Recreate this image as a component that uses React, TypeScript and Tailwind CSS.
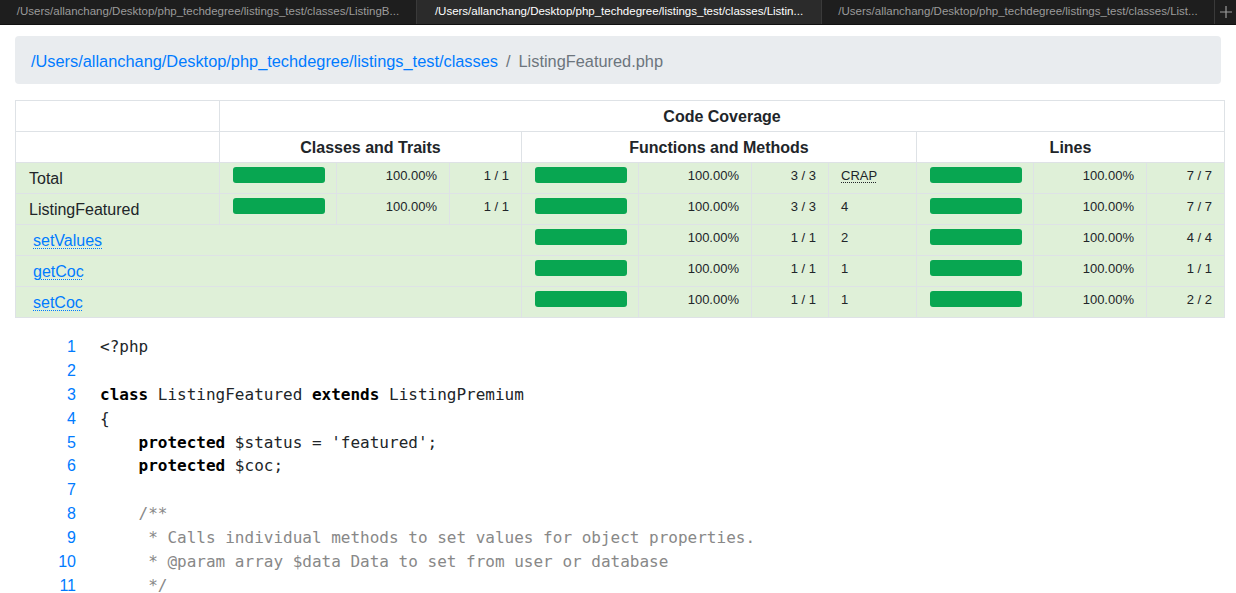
import React from 'react';

const SANS = "font-['Liberation_Sans',Arial,sans-serif]";
const MONO = "font-['DejaVu_Sans_Mono',monospace]";

type Row = {
  name: string;
  method?: boolean;
  classes?: { pct: string; count: string };
  fns: { pct: string; count: string };
  crap: string;
  lines: { pct: string; count: string };
};

const rows: Row[] = [
  { name: 'Total', classes: { pct: '100.00%', count: '1 / 1' }, fns: { pct: '100.00%', count: '3 / 3' }, crap: 'CRAP', lines: { pct: '100.00%', count: '7 / 7' } },
  { name: 'ListingFeatured', classes: { pct: '100.00%', count: '1 / 1' }, fns: { pct: '100.00%', count: '3 / 3' }, crap: '4', lines: { pct: '100.00%', count: '7 / 7' } },
  { name: 'setValues', method: true, fns: { pct: '100.00%', count: '1 / 1' }, crap: '2', lines: { pct: '100.00%', count: '4 / 4' } },
  { name: 'getCoc', method: true, fns: { pct: '100.00%', count: '1 / 1' }, crap: '1', lines: { pct: '100.00%', count: '1 / 1' } },
  { name: 'setCoc', method: true, fns: { pct: '100.00%', count: '1 / 1' }, crap: '1', lines: { pct: '100.00%', count: '2 / 2' } },
];

const tabs = [
  { label: '/Users/allanchang/Desktop/php_techdegree/listings_test/classes/ListingB...', w: 'w-[417px]', active: false },
  { label: '/Users/allanchang/Desktop/php_techdegree/listings_test/classes/Listin...', w: 'w-[405px]', active: true },
  { label: '/Users/allanchang/Desktop/php_techdegree/listings_test/classes/List...', w: 'w-[393px]', active: false },
];

// each code line is a list of [text, kind]
type Tok = [string, 'k' | 'c' | 't'];
const code: Tok[][] = [
  [['<?php', 't']],
  [],
  [['class', 'k'], [' ListingFeatured ', 't'], ['extends', 'k'], [' ListingPremium', 't']],
  [['{', 't']],
  [['    ', 't'], ['protected', 'k'], [" $status = 'featured';", 't']],
  [['    ', 't'], ['protected', 'k'], [' $coc;', 't']],
  [],
  [['    /**', 'c']],
  [['     * Calls individual methods to set values for object properties.', 'c']],
  [['     * @param array $data Data to set from user or database', 'c']],
  [['     */', 'c']],
];

function Bar() {
  return <div className="h-4 w-[92px] rounded-[3px] bg-[#08a651]" />;
}

const cell = 'border border-[#dee2e6] px-3 h-[31px] align-top pb-0';
const big = `${cell} pt-1 leading-6`;
const small = `${cell} pt-[3px] text-[13px] leading-5`;
const barCell = `${cell} pl-[13px] pt-[4px]`;

export default function App() {
  return (
    <div className={`min-h-screen bg-white ${SANS} text-[#212529]`}>
      {/* tab strip */}
      <div className="flex h-[25px] bg-[#1e1e1e] border-b border-[#111]">
        {tabs.map((t) => (
          <div
            key={t.label}
            className={`${t.w} shrink-0 flex items-center justify-center border-r border-[#3a3a3a] text-[11.5px] truncate ${
              t.active ? 'bg-[#2b2b2b] text-white' : 'text-[#9b9b9b]'
            }`}
          >
            {t.label}
          </div>
        ))}
        <div className="flex-1 flex items-center justify-center text-[#9b9b9b]">
          <svg width="12" height="12" viewBox="0 0 12 12" stroke="currentColor" strokeWidth="1.2">
            <path d="M6 0v12M0 6h12" />
          </svg>
        </div>
      </div>

      <div className="px-[15px]">
        {/* breadcrumb */}
        <div className="mt-[11px] h-12 flex items-center pt-[2px] px-4 rounded bg-[#e9ecef] text-[16.35px]">
          <span className="text-[#007bff]">/Users/allanchang/Desktop/php_techdegree/listings_test/classes</span>
          <span className="px-2 text-[#6c757d]">/</span>
          <span className="text-[#6c757d]">ListingFeatured.php</span>
        </div>

        {/* coverage table */}
        <table className="mt-4 w-[1209px] table-fixed border-collapse text-base">
          <colgroup>
            <col className="w-[204px]" />
            <col className="w-[117px]" />
            <col className="w-[113px]" />
            <col className="w-[72px]" />
            <col className="w-[117px]" />
            <col className="w-[113px]" />
            <col className="w-[77px]" />
            <col className="w-[88px]" />
            <col className="w-[117px]" />
            <col className="w-[113px]" />
            <col className="w-[78px]" />
          </colgroup>
          <thead>
            <tr>
              <td className={big} />
              <th colSpan={10} className={`${big} text-center font-bold`}>Code Coverage</th>
            </tr>
            <tr>
              <td className={big} />
              <th colSpan={3} className={`${big} text-center font-bold`}>Classes and Traits</th>
              <th colSpan={4} className={`${big} text-center font-bold`}>Functions and Methods</th>
              <th colSpan={3} className={`${big} text-center font-bold`}>Lines</th>
            </tr>
          </thead>
          <tbody>
            {rows.map((r) => (
              <tr key={r.name} className="bg-[#dff0d8]">
                {r.method ? (
                  <td colSpan={4} className={`${big} pl-[17px]`}>
                    <span className="text-[#007bff] underline decoration-dotted decoration-1 underline-offset-2">{r.name}</span>
                  </td>
                ) : (
                  <>
                    <td className={`${big} pl-[13px]`}>{r.name}</td>
                    <td className={barCell}><Bar /></td>
                    <td className={`${small} text-right`}>{r.classes?.pct}</td>
                    <td className={`${small} text-right`}>{r.classes?.count}</td>
                  </>
                )}
                <td className={barCell}><Bar /></td>
                <td className={`${small} text-right`}>{r.fns.pct}</td>
                <td className={`${small} text-right`}>{r.fns.count}</td>
                <td className={small}>
                  {r.crap === 'CRAP' ? (
                    <span className="underline decoration-dotted decoration-1 underline-offset-2">CRAP</span>
                  ) : (
                    r.crap
                  )}
                </td>
                <td className={barCell}><Bar /></td>
                <td className={`${small} text-right`}>{r.lines.pct}</td>
                <td className={`${small} text-right`}>{r.lines.count}</td>
              </tr>
            ))}
          </tbody>
        </table>

        {/* source */}
        <div className="mt-[17px] flex flex-col">
          {code.map((line, i) => (
            <div key={i} className="flex h-[23.9px] items-center">
              <div className="w-[61px] shrink-0 text-right text-base text-[#007bff]">{i + 1}</div>
              <pre className={`ml-6 ${MONO} text-base leading-6 text-[#212529]`}>
                {line.map(([txt, kind], j) => (
                  <span
                    key={j}
                    className={kind === 'k' ? 'font-bold text-black' : kind === 'c' ? 'text-[#888888]' : ''}
                  >
                    {txt}
                  </span>
                ))}
              </pre>
            </div>
          ))}
        </div>
      </div>
    </div>
  );
}
